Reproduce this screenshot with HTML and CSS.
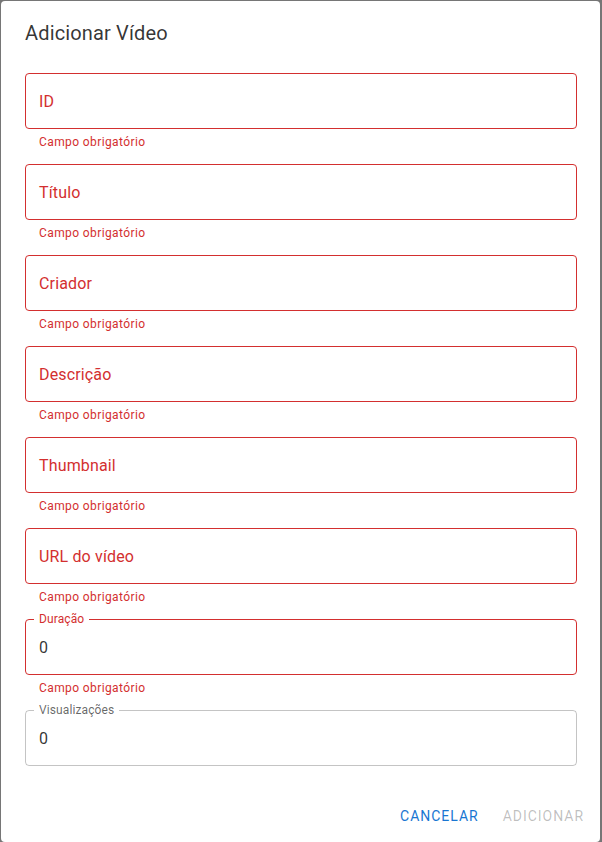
FILE: index.html
```html
<!DOCTYPE html>
<html lang="pt">
<head>
<meta charset="utf-8">
<title>Adicionar Vídeo</title>
<link rel="stylesheet" href="styles.css">
</head>
<body>
<div class="dialog">
  <h2 class="dialog-title">Adicionar Vídeo</h2>
  <div class="dialog-content">
    <div class="field error">
      <div class="box"><span class="label">ID</span></div>
      <p class="helper">Campo obrigatório</p>
    </div>
    <div class="field error">
      <div class="box"><span class="label">Título</span></div>
      <p class="helper">Campo obrigatório</p>
    </div>
    <div class="field error">
      <div class="box"><span class="label">Criador</span></div>
      <p class="helper">Campo obrigatório</p>
    </div>
    <div class="field error">
      <div class="box"><span class="label">Descrição</span></div>
      <p class="helper">Campo obrigatório</p>
    </div>
    <div class="field error">
      <div class="box"><span class="label">Thumbnail</span></div>
      <p class="helper">Campo obrigatório</p>
    </div>
    <div class="field error">
      <div class="box"><span class="label">URL do vídeo</span></div>
      <p class="helper">Campo obrigatório</p>
    </div>
    <div class="field error">
      <div class="box"><span class="float-label">Duração</span><span class="value">0</span></div>
      <p class="helper">Campo obrigatório</p>
    </div>
    <div class="field">
      <div class="box"><span class="float-label">Visualizações</span><span class="value">0</span></div>
    </div>
  </div>
  <div class="dialog-actions">
    <button class="btn btn-primary">Cancelar</button>
    <button class="btn" disabled>Adicionar</button>
  </div>
</div>
</body>
</html>
```

FILE: styles.css
```css
* { box-sizing: border-box; }

html, body {
  margin: 0;
  padding: 0;
}

body {
  background: #767676;
  height: 842px;
  overflow: hidden;
  font-family: Roboto, "Liberation Sans", Arial, sans-serif;
  color: rgba(0, 0, 0, 0.87);
}

.dialog {
  margin: 1px 0 0 1px;
  width: 599px;
  height: 841px;
  background: #fff;
  border-radius: 4px;
}

.dialog-title {
  margin: 0;
  padding: 16px 24px;
  font-size: 20px;
  font-weight: 400;
  line-height: 32px;
  letter-spacing: 0.0075em;
  color: rgba(0, 0, 0, 0.8);
}

.dialog-content {
  display: flex;
  flex-direction: column;
  padding: 0 23px 20px 24px;
}

.field {
  margin: 8px 0 4px;
}

.box {
  position: relative;
  height: 56px;
  border: 1px solid rgba(0, 0, 0, 0.23);
  border-radius: 4px;
  display: flex;
  align-items: center;
  padding: 0 13px;
}

.field.error .box {
  border-color: #d32f2f;
}

.label {
  font-size: 16px;
  line-height: 23px;
  letter-spacing: 0.00938em;
  color: rgba(0, 0, 0, 0.6);
}

.field.error .label {
  color: #d32f2f;
}

.value {
  font-size: 16px;
  line-height: 23px;
  letter-spacing: 0.00938em;
  color: rgba(0, 0, 0, 0.8);
}

.float-label {
  position: absolute;
  top: -7px;
  left: 8px;
  padding: 0 5px;
  background: #fff;
  font-size: 12px;
  line-height: 12px;
  letter-spacing: 0.00938em;
  color: rgba(0, 0, 0, 0.6);
}

.field.error .float-label {
  color: #d32f2f;
}

.helper {
  margin: 3px 14px 0;
  font-size: 12px;
  line-height: 20px;
  letter-spacing: 0.03333em;
  color: #d32f2f;
}

.dialog-actions {
  display: flex;
  justify-content: flex-end;
  gap: 8px;
  padding: 8px;
}

.btn {
  border: 0;
  background: transparent;
  padding: 6px 8px;
  min-width: 64px;
  border-radius: 4px;
  font-family: Roboto, "Liberation Sans", Arial, sans-serif;
  font-size: 14px;
  font-weight: 400;
  line-height: 24px;
  letter-spacing: 0.07em;
  text-transform: uppercase;
  color: rgba(0, 0, 0, 0.26);
}

.btn-primary {
  color: #1976d2;
}
```
